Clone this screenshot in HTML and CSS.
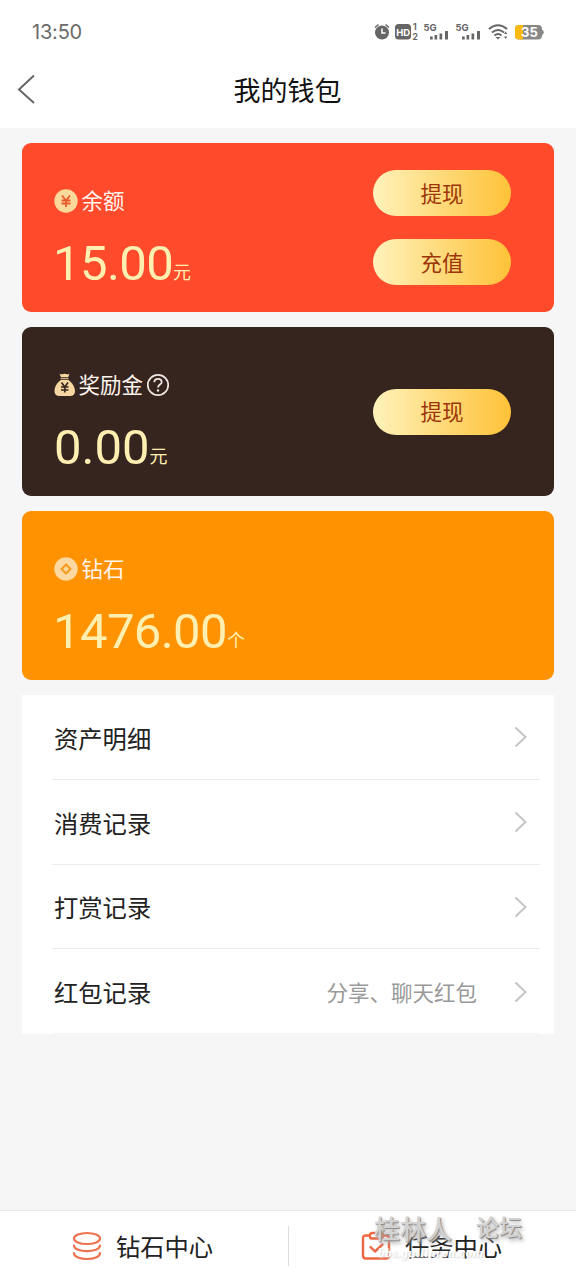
FILE: index.html
```html
<!DOCTYPE html>
<html lang="zh-CN">
<head>
<meta charset="utf-8">
<title>我的钱包</title>
<link rel="stylesheet" href="styles.css">
</head>
<body>
<header class="top">
  <div class="status">
    <span class="time">13:50</span>
    <svg class="status-icons" width="172" height="20" viewBox="0 0 172 20">
      <g fill="#666">
        <circle cx="10" cy="10.5" r="7"/>
        <path d="M3 5.5 6.5 2.500M17 5.500 13.500 2.500" stroke="#666" stroke-width="1.500"/>
        <path d="M10 6.500V11h3.500" fill="none" stroke="#fff" stroke-width="1.500"/>
        <rect x="23" y="2" width="16" height="15.500" rx="3.500"/>
        <text class="hd" x="24.200" y="13.500" fill="#fff">HD</text>
        <text class="sim" x="41" y="8">1</text>
        <text class="sim" x="40.500" y="17.500">2</text>
        <text class="net" x="51.500" y="9">5G</text>
        <path d="M58 14.500h2.700v3H58zM62.500 13h2.700v4.500h-2.700zM67.500 11.500h2.700v6h-2.700zM73 9h3v8.500h-3z"/>
        <text class="net" x="83.500" y="9">5G</text>
        <path d="M90 14.500h2.700v3H90zM94.500 13h2.700v4.500h-2.700zM99.500 11.500h2.700v6h-2.700zM105 9h3v8.500h-3z"/>
        <g fill="none" stroke="#666" stroke-width="2"><path d="M117 7q9-7.500 18 0M120 10.500q6-5 12 0M122.500 13.500q3.500-3 7 0"/></g>
        <path d="m126 17.500-2.500-2.500h5zM132 12l1.700-2.500 1.600 2.500zM132 14.500l1.700 2.500 1.600-2.500z"/>
        <rect x="143" y="3" width="27" height="14.500" rx="4" fill="#888"/>
        <path d="M147 3h4v14.500h-4q-4 0-4-4V7q0-4 4-4z" fill="#f8b80c"/>
        <path d="M170 7.500q3.500 2.500 0 6z" fill="#888"/>
        <text class="battery" x="149" y="15" fill="#fff">35</text>
      </g>
    </svg>
  </div>
  <div class="nav">
    <svg class="back" width="20" height="30" viewBox="0 0 20 30"><path d="M17 1.500 2 15.500l15 13.500" fill="none" stroke="#666" stroke-width="2"/></svg>
    <h1 class="title">我的钱包</h1>
  </div>
</header>

<main class="wallet">
  <section class="card balance">
    <div class="info">
      <div class="label"><svg width="24" height="24" viewBox="0 0 24 24"><circle cx="12" cy="12" r="11.700" fill="#fbd99b"/><path d="m8 6.500 4 5 4-5M7.500 11.500h9M7.500 14.500h9M12 11.500V18" fill="none" stroke="#e65c2b" stroke-width="1.800"/></svg><span class="name">余额</span></div>
      <div class="amount"><span class="num">15.00</span><span class="unit">元</span></div>
    </div>
    <div class="actions"><button class="pill">提现</button><button class="pill">充值</button></div>
  </section>
  <section class="card reward">
    <div class="info">
      <div class="label"><svg width="22" height="24" viewBox="0 0 22 24"><path d="M5.500.7q2.500 1 5 .1 3 1 5-.1l-1.300 3.500H7zM6.500 5.300h8v1h-8zM7 7h7.500c4 3 6.500 7.300 6.500 11q0 5-5 5H5.500Q.5 23 .5 18C.5 14 3 9.500 7 7z" fill="#f7d7a1"/><path d="m7.500 9.500 3.300 4.500L14 9.500M7 14h7.500M7 17h7.500M10.800 14v5.500" fill="none" stroke="#38271f" stroke-width="1.700"/></svg><span class="name">奖励金</span><svg class="help" width="24" height="24" viewBox="0 0 24 24"><g fill="none" stroke="#eee8e4" stroke-width="1.700"><circle cx="12" cy="12" r="10.200"/><path d="M8.300 9.200q.2-3.400 3.700-3.400t3.700 3.100c0 2.600-3.700 2.600-3.700 5.600"/></g><circle cx="12" cy="17.500" r="1.200" fill="#eee8e4"/></svg></div>
      <div class="amount"><span class="num">0.00</span><span class="unit">元</span></div>
    </div>
    <div class="actions"><button class="pill">提现</button></div>
  </section>
  <section class="card diamond">
    <div class="info">
      <div class="label"><svg width="24" height="24" viewBox="0 0 24 24"><circle cx="12" cy="12" r="11.700" fill="#fdd8a0"/><path d="M12 7.500 16.500 12 12 16.500 7.500 12z" fill="#fdd8a0" stroke="#f59a1c" stroke-width="2" stroke-linejoin="round"/></svg><span class="name">钻石</span></div>
      <div class="amount"><span class="num">1476.00</span><span class="unit">个</span></div>
    </div>
  </section>

  <ul class="list">
    <li class="row"><span>资产明细</span><svg class="arrow" width="14" height="22" viewBox="0 0 14 22"><path d="m1.500 1.500 10 9.500-10 9.500"/></svg></li>
    <li class="row"><span>消费记录</span><svg class="arrow" width="14" height="22" viewBox="0 0 14 22"><path d="m1.500 1.500 10 9.500-10 9.500"/></svg></li>
    <li class="row"><span>打赏记录</span><svg class="arrow" width="14" height="22" viewBox="0 0 14 22"><path d="m1.500 1.500 10 9.500-10 9.500"/></svg></li>
    <li class="row"><span>红包记录</span><span class="hint">分享、聊天红包</span><svg class="arrow" width="14" height="22" viewBox="0 0 14 22"><path d="m1.500 1.500 10 9.500-10 9.500"/></svg></li>
  </ul>
</main>

<footer class="tabs">
  <div class="tab">
    <svg width="30" height="30" viewBox="0 0 30 30"><g fill="none" stroke="#ed7350" stroke-width="2.200" stroke-linecap="round"><ellipse cx="15" cy="7.500" rx="13" ry="5.500"/><path d="M2 14.500c0 7.500 26 7.500 26 0M2 22c0 8 26 8 26 0"/></g></svg>
    <span>钻石中心</span>
  </div>
  <div class="tab">
    <svg width="30" height="30" viewBox="0 0 30 30"><g fill="none" stroke="#ed6743" stroke-width="2.400" stroke-linejoin="round" stroke-linecap="round"><path d="M9 4.500H5q-3 0-3 3v17q0 3 3 3h20q3 0 3-3v-17q0-3-3-3h-3"/><rect x="9" y="2" width="13" height="5.500" rx="2"/><path d="m9.500 16 4.500 4.500 7.500-7"/></g></svg>
    <span>任务中心</span>
  </div>
  <div class="watermark"><span class="mark-name">桂林人<small>论坛</small></span><span class="mark-url">bbs.guilinren.com</span></div>
</footer>
</body>
</html>
```

FILE: styles.css
```css
* { box-sizing: border-box; }
body {
  margin: 0;
  height: 1280px;
  display: flex;
  flex-direction: column;
  overflow: hidden;
  background: #f6f6f6;
  color: #222;
  font-family: Roboto, "Noto Sans CJK SC", sans-serif;
}
.top { height: 128px; background: #fff; }
.status {
  height: 55px;
  padding: 9px 32px 0 32px;
  display: flex;
  align-items: center;
  justify-content: space-between;
}
.time { font: 20px Inter, sans-serif; letter-spacing: -0.2px; color: #6b6b6b; }
.status-icons { font-family: Inter, sans-serif; font-weight: 700; }
.hd { font-size: 9.5px; }
.sim { font-size: 8.5px; }
.net { font-size: 9.5px; }
.battery { font-size: 13px; }
.nav {
  height: 73px;
  padding-left: 17px;
  display: grid;
  grid-template-columns: 20px 1fr 38px;
  align-items: center;
}
.back { margin-top: -5px; }
.title { margin: 0; padding-top: 1px; text-align: center; font-size: 27px; line-height: 40px; font-weight: 400; color: #111; }
.wallet { flex: 1; padding: 15px 22px 0; }
.card {
  height: 169px;
  margin-bottom: 15px;
  padding: 0 43px 0 32px;
  display: flex;
  align-items: center;
  justify-content: space-between;
  border-radius: 9px;
}
.balance { background: #ff4a2b; }
.reward { background: #36251f; }
.diamond { background: #ff9200; }
.info { align-self: flex-start; padding-top: 43px; }
.label { height: 30px; display: flex; align-items: center; color: #fff4ee; font-size: 21.5px; }
.label > svg { margin-left: -0.5px; }
.name { margin-left: 4px; padding-top: 2px; line-height: 30px; }
.reward .name { margin-left: 3px; }
.label > .help { margin-left: 3px; }
.amount { height: 60px; margin: 18px 0 0 -1px; display: flex; align-items: baseline; line-height: 60px; color: #ffefb0; }
.num { font-size: 49px; letter-spacing: -0.6px; }
.reward .num { margin-left: 1px; letter-spacing: 0; }
.unit { font-size: 18px; padding-bottom: 2px; line-height: 20px; transform: translateY(-1px); }
.actions { display: flex; flex-direction: column; gap: 23px; }
.pill {
  width: 138px;
  height: 46px;
  padding: 0 0 2px;
  border: 0;
  border-radius: 23px;
  background: linear-gradient(90deg, #fff2bb, #ffc238);
  color: #9c3608;
  font: 21.5px "Noto Sans CJK SC", sans-serif;
}
.list { margin: 0; padding: 0 14px 0 30px; list-style: none; background: #fff; }
.row {
  height: 84.8px;
  padding: 1px 12px 0 2px;
  display: flex;
  align-items: center;
  border-bottom: 1px solid #ebebeb;
  font-size: 24.3px;
}
.row:last-child { border-bottom-color: #f6f6f6; }
.hint { margin-left: auto; margin-right: 37px; font-size: 21.5px; color: #999; }
.arrow { margin-left: auto; fill: none; stroke: #c5c5c5; stroke-width: 2; }
.hint + .arrow { margin-left: 0; }
.tabs {
  position: relative;
  height: 69px;
  display: grid;
  grid-template-columns: 1fr 1fr;
  align-items: center;
  background: #fff;
  box-shadow: 0 -1px 1px #e9e9e9;
}
.tab { height: 40px; display: flex; align-items: center; justify-content: center; gap: 14px; padding-right: 3px; font-size: 24.3px; }
.tab + .tab { border-left: 1px solid #ddd; padding-right: 2px; }
.watermark { position: absolute; left: 374px; top: 3px; width: 155px; }
.mark-name {
  display: flex;
  justify-content: space-between;
  width: 148px;
  font: 500 26px/27px "Noto Sans CJK SC", sans-serif;
  color: #d2d2d2;
  text-shadow: 1px 1px 1px #888, 2px 3px 4px #aaa;
}
.mark-name small { font-size: 23px; line-height: 25px; }
.mark-url {
  display: block;
  padding: 3px 0 0 4px;
  font: italic 700 13px/18px "Liberation Serif", serif;
  letter-spacing: 0.5px;
  color: #fff;
  text-shadow: 1px 1px 2px #ccc;
}
```
